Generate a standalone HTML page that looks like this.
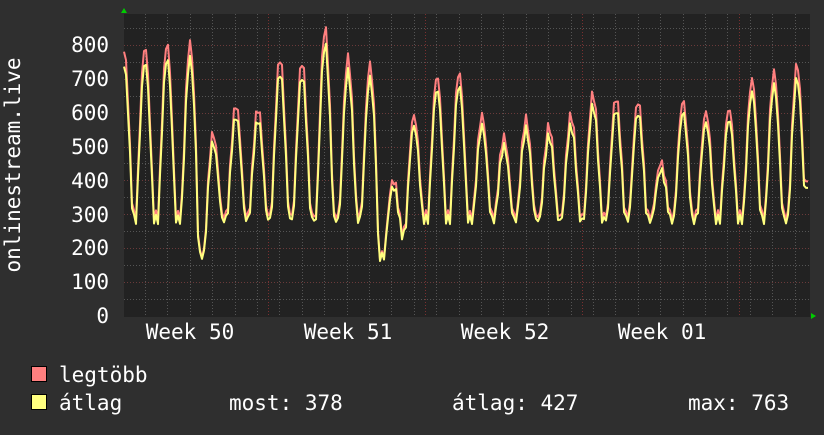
<!DOCTYPE html>
<html><head><meta charset="utf-8"><style>
body{margin:0;background:#2f2f2f;width:824px;height:430px;overflow:hidden}
svg text{font-family:"DejaVu Sans Mono","Liberation Mono",monospace;fill:#fff}
</style></head><body>
<svg id="s" width="824" height="430" xmlns="http://www.w3.org/2000/svg">
<rect x="0" y="0" width="824" height="430" fill="#2f2f2f"/>
<rect x="124" y="14" width="686" height="303" fill="#222"/>
<g id="grid"></g>
<path id="mx" fill="none" stroke="#ff7f7f" stroke-width="2" stroke-linejoin="round"/>
<path id="av" fill="none" stroke="#ffff7f" stroke-width="2" stroke-linejoin="round"/>
<g font-size="21" text-anchor="end">
<text x="109" y="323">0</text><text x="109" y="289">100</text><text x="109" y="255">200</text><text x="109" y="222">300</text><text x="109" y="188">400</text><text x="109" y="154">500</text><text x="109" y="120">600</text><text x="109" y="86">700</text><text x="109" y="52">800</text>
</g>
<text font-size="21" transform="translate(20,165) rotate(-90)" text-anchor="middle">onlinestream.live</text>
<g font-size="21" text-anchor="middle">
<text x="190" y="339">Week 50</text><text x="348" y="339">Week 51</text><text x="505" y="339">Week 52</text><text x="662" y="339">Week 01</text>
</g>
<polygon points="121,13 127,13 124,8" fill="#0c0"/>
<polygon points="811,313 811,319 816,316" fill="#0c0"/>
<rect x="31.5" y="366.5" width="15" height="15" fill="#ff7f7f" stroke="#000"/>
<rect x="31.5" y="394.5" width="15" height="15" fill="#ffff7f" stroke="#000"/>
<g font-size="21">
<text x="59" y="382">legtöbb</text>
<text x="59" y="410">átlag</text>
<text x="229" y="410">most: 378</text>
<text x="452" y="410">átlag: 427</text>
<text x="688" y="410">max: 763</text>
</g>
</svg>
<script>
var ns="http://www.w3.org/2000/svg",g=document.getElementById('grid');
function ln(x1,y1,x2,y2,c){var l=document.createElementNS(ns,'line');l.setAttribute('x1',x1);l.setAttribute('y1',y1);l.setAttribute('x2',x2);l.setAttribute('y2',y2);l.setAttribute('stroke',c);l.setAttribute('stroke-dasharray','1,2');g.appendChild(l);}
function Y(v){return 316-v*0.339;}
for(var v=50;v<=850;v+=50){var y=Math.round(Y(v))+.5;if(y<14)break;ln(124,y,810,y,v%100?'#555':'#6a3a3a');}
for(var x=124+21;x<810;x+=22.4){var xx=Math.round(x)+.5;ln(xx,14,xx,317,'#555');}
[268,425,582,739].forEach(function(x){ln(x+.5,14,x+.5,317,'#7a3030');});
var pk=[[124,740],[145,750],[167,760],[190,760],[213,510],[236,590],[258,580],[280,720],[302,710],[325,800],[348,720],[370,700],[393,380],[414,560],[437,670],[459,680],[482,560],[504,500],[526,550],[549,530],[571,560],[593,620],[616,610],[638,600],[661,430],[683,600],[706,570],[729,580],[752,660],[774,680],[797,700]];
var tr={205:180,385:175,404:240};
var a="",m="";
for(var x=124;x<=808;x+=2){
 var best=pk[0],d=1e9;for(var i=0;i<pk.length;i++){var dd=Math.abs(pk[i][0]-x);if(dd<d){d=dd;best=pk[i];}}
 var base=285;for(var k in tr){if(Math.abs(x-k)<8)base=tr[k];}
 var t=Math.min(d/9,1),f=Math.pow(Math.cos(t*Math.PI/2),1.3);
 var v=base+(best[1]-base)*f;v+=Math.sin(x*1.7)*14;
 if(x>800)v=Math.max(v,378);
 var vm=v+(v-250)*0.07+10;
 a+=(a?"L":"M")+x+","+Y(v).toFixed(1);m+=(m?"L":"M")+x+","+Y(vm).toFixed(1);
}
document.getElementById('av').setAttribute('d',a);document.getElementById('mx').setAttribute('d',m);
</script>
</body></html>
